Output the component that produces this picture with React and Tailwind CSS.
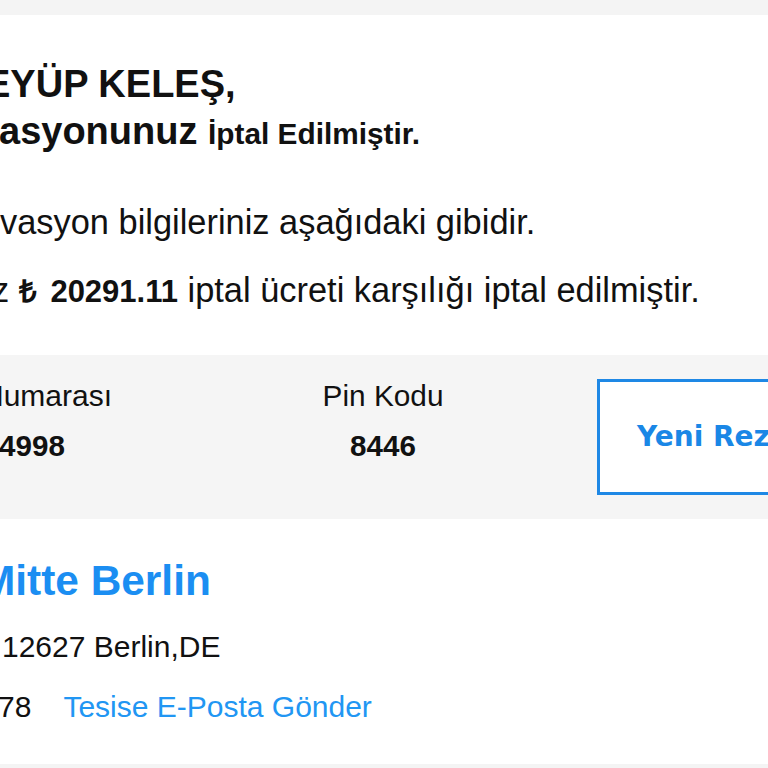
import React from 'react'

const sans = "font-['Liberation_Sans','Arial',sans-serif]"

function BookingInfo() {
    return (
        <div className='mt-[47px] h-[164px] bg-[#f5f5f5] flex'>
            <div className='w-[263px] shrink-0 pt-[26px]'>
                <p className='-ml-[18px] text-[30px] leading-none whitespace-nowrap'>Numarası</p>
                <p className='-ml-[1px] mt-[20px] text-[29.6px] leading-none font-bold'>4998</p>
            </div>
            <div className='w-[240px] shrink-0 pt-[26px] text-center'>
                <p className='text-[29.8px] leading-none'>Pin Kodu</p>
                <p className='mt-[20.4px] text-[29.6px] leading-none font-bold'>8446</p>
            </div>
            <a className="ml-[94px] mt-[24px] w-[300px] h-[116px] shrink-0 bg-white border-[3px] border-[#1e88e5] flex items-center pl-[37px] text-[#1a87e6] text-[28px] leading-none font-bold whitespace-nowrap font-['DejaVu_Sans',sans-serif]">
                Yeni Rezervasyon
            </a>
        </div>
    )
}

function HotelInfo() {
    return (
        <div>
            <h3 className='-ml-[20px] mt-[41.4px] text-[42.4px] leading-none font-bold text-[#1b8ef2] whitespace-nowrap'>Mitte Berlin</h3>
            <p className='ml-[2px] mt-[29.4px] text-[30px] leading-none whitespace-nowrap'>12627 Berlin,DE</p>
            <div className='-ml-[2px] mt-[30px] flex text-[30px] leading-none whitespace-nowrap'>
                <span>78</span>
                <a className='ml-[32px] text-[#2196f3]'>Tesise E-Posta Gönder</a>
            </div>
        </div>
    )
}

export default function App() {
    return (
        <div className={`w-[768px] h-[768px] overflow-hidden bg-white text-[#111] ${sans}`}>
            <div className='h-[15px] bg-[#f4f4f4]' />

            <h2 className='-ml-[15px] mt-[50px] text-[38px] leading-none font-bold whitespace-nowrap'>EYÜP KELEŞ,</h2>
            <p className='-ml-[1px] mt-[9px] text-[38px] leading-none font-bold whitespace-nowrap'>
                asyonunuz <span className='text-[29.8px]'>İptal Edilmiştir.</span>
            </p>

            <p className='mt-[55px] text-[34.4px] leading-none whitespace-nowrap'>vasyon bilgileriniz aşağıdaki gibidir.</p>
            <p className='-ml-[8px] mt-[34px] text-[34.4px] leading-none whitespace-nowrap'>
                z <b className='text-[31px]'>₺ <span className='ml-[5px]'>20291.11</span></b> iptal ücreti karşılığı iptal edilmiştir.
            </p>

            <BookingInfo />
            <HotelInfo />

            <div className='mt-[42px] h-[10px] bg-[#f4f4f4]' />
        </div>
    )
}
